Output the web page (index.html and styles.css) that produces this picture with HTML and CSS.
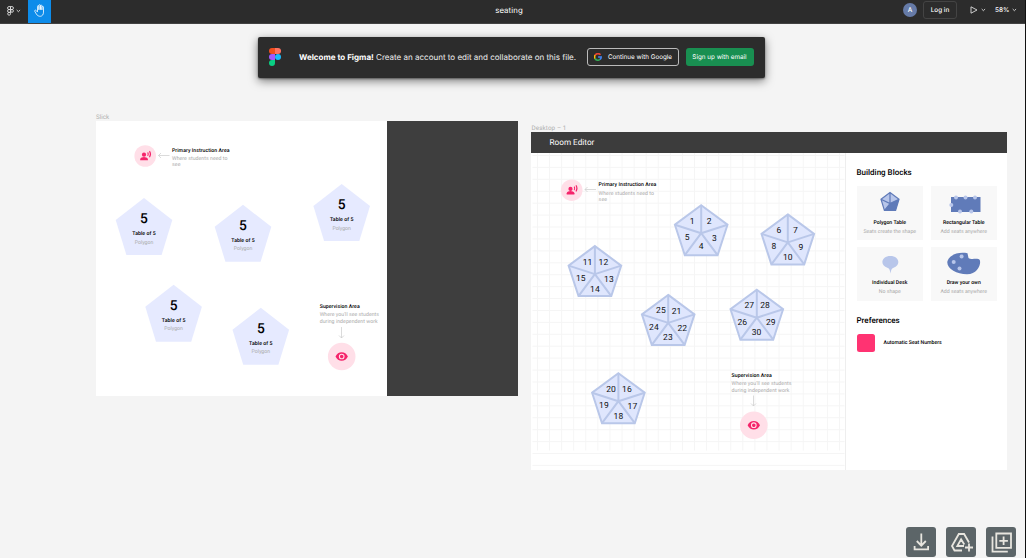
FILE: index.html
```html
<!DOCTYPE html>
<html lang="en">
<head>
<meta charset="utf-8">
<title>seating</title>
<link rel="stylesheet" href="styles.css">
</head>
<body>
<svg class="defs" width="0" height="0">
  <defs>
    <polygon id="pentagon" points="0,0 28.3,22 17.6,57 -17.6,57 -28.3,22"/>
    <g id="seats">
      <polygon points="0,1 26.3,20.5 16.4,51 -16.4,51 -26.3,20.5"/>
      <path d="M0 29V1M0 29L26.3 20.5M0 29L16.4 51M0 29L-16.4 51M0 29L-26.3 20.5"/>
    </g>
    <g id="speaker">
      <circle r="10.8" fill="#ffdfe8"/>
      <g fill="#f5246b">
        <circle cx="-1.2" cy="-1.3" r="2.1"/>
        <path d="M-5 4.2V3C-5 1.6-2.4.9-1.2.9S2.7 1.6 2.7 3v1.2z"/>
      </g>
      <path d="M2.500-3.600q1.100 1.700 0 3.500M4.300-4.900q2 3.100 0 6.200" fill="none" stroke="#f5246b" stroke-width="1.100"/>
    </g>
    <g id="eye">
      <circle r="13.8" fill="#ffdfe8"/>
      <path d="M-6.2 0C-5-2.8-2.6-4.3 0-4.3S5-2.8 6.2 0C5 2.8 2.6 4.3 0 4.3S-5 2.8-6.2 0z" fill="#f5246b"/>
      <circle r="2.3" fill="#f5246b" stroke="#ffdfe8" stroke-width="1.1"/>
    </g>
  </defs>
</svg>

<header class="topbar">
  <div class="menu">
    <svg width="7" height="10" viewBox="0 0 7 10" class="line"><path d="M3.5.6H2a1.4 1.4 0 0 0 0 2.9h1.5zM3.5.6H5a1.4 1.4 0 0 1 0 2.9H3.5zM3.5 3.5H2a1.4 1.4 0 0 0 0 2.9h1.5zM2 6.4a1.4 1.4 0 1 0 1.5 1.4V6.4z"/><circle cx="5" cy="4.9" r="1.4"/></svg>
    <svg width="5" height="4" viewBox="0 0 5 4" class="line"><path d="M.7 1l1.7 1.7L4.1 1"/></svg>
  </div>
  <div class="hand">
    <svg width="12" height="13" viewBox="0 0 12 13"><path d="M3.5 7.8V2.4c0-1.1 1.4-1.1 1.4 0V6M4.9 5.7V1.5c0-1.1 1.5-1.1 1.5 0v4.2M6.4 5.7V1.9c0-1.1 1.5-1.1 1.5 0v3.9M7.9 6V3.1c0-1 1.6-1 1.6 0v5c0 5.3-5.4 5.1-7.1 2L.8 7.4c-.6-1.1.8-1.7 1.5-.8l1.2 1.5" fill="none" stroke="#fff" stroke-width=".8" stroke-linejoin="round"/></svg>
  </div>
  <div class="title">seating</div>
  <div class="account">
    <span class="avatar">A</span>
    <span class="login">Log in</span>
    <svg class="play line" width="8" height="8" viewBox="0 0 8 8"><path d="M1 .8L7 4 1 7.2z"/></svg>
    <svg class="chev line" width="5" height="4" viewBox="0 0 5 4"><path d="M.7 1l1.7 1.7L4.1 1"/></svg>
    <span class="percent">58%</span>
    <svg class="chev2 line" width="5" height="4" viewBox="0 0 5 4"><path d="M.7 1l1.7 1.7L4.1 1"/></svg>
  </div>
</header>

<section class="banner">
  <svg width="12" height="18" viewBox="0 0 12 18"><path d="M6 0H3a3 3 0 0 0 0 6h3z" fill="#f24e1e"/><path d="M6 0h3a3 3 0 0 1 0 6H6z" fill="#ff7262"/><path d="M6 6H3a3 3 0 0 0 0 6h3z" fill="#a259ff"/><circle cx="9" cy="9" r="3" fill="#1abcfe"/><path d="M3 12h3v3a3 3 0 1 1-3-3z" fill="#0acf83"/></svg>
  <p class="welcome"><b>Welcome to Figma!</b> Create an account to edit and collaborate on this file.</p>
  <div class="google">
    <svg width="8" height="8" viewBox="0 0 8 8" fill="none" stroke-width="1.6"><path d="M1 2.4A3.3 3.3 0 0 1 6.5 1.8" stroke="#ea4335"/><path d="M1.1 2.2a3.3 3.3 0 0 0 0 3.5" stroke="#fbbc05"/><path d="M1 5.5a3.3 3.3 0 0 0 5.2.8" stroke="#34a853"/><path d="M4.1 4h3.1a3.3 3.3 0 0 1-1.1 2.4" stroke="#4285f4"/></svg>
    <span>Continue with Google</span>
  </div>
  <div class="email">Sign up with email</div>
</section>

<main class="canvas">
  <span class="label slick-label">Slick</span>
  <section class="frame slick">
    <svg width="423" height="275" viewBox="96 121 423 275">
      <use href="#speaker" x="145.2" y="156"/>
      <path class="arrow" d="M169.500 155.500H158.500M161 153l-2.500 2.500 2.500 2.500"/>
      <text class="bold" x="172" y="151.600" textLength="57.500">Primary Instruction Area</text>
      <text class="note" x="172" y="160.200" textLength="55.500">Where students need to</text>
      <text class="note" x="172" y="166.400" textLength="8.500">see</text>
      <g class="table" transform="translate(144 198)"><use href="#pentagon"/><text class="count" y="25">5</text><text class="bold" y="37" textLength="23.500">Table of 5</text><text class="note" y="45.500" textLength="18.500">Polygon</text></g>
      <g class="table" transform="translate(243 204.800)"><use href="#pentagon"/><text class="count" y="25">5</text><text class="bold" y="37" textLength="23.500">Table of 5</text><text class="note" y="45.500" textLength="18.500">Polygon</text></g>
      <g class="table" transform="translate(341.700 184)"><use href="#pentagon"/><text class="count" y="25">5</text><text class="bold" y="37" textLength="23.500">Table of 5</text><text class="note" y="45.500" textLength="18.500">Polygon</text></g>
      <g class="table" transform="translate(173.600 284.700)"><use href="#pentagon"/><text class="count" y="25">5</text><text class="bold" y="37" textLength="23.500">Table of 5</text><text class="note" y="45.500" textLength="18.500">Polygon</text></g>
      <g class="table" transform="translate(260.800 307.700)"><use href="#pentagon"/><text class="count" y="25">5</text><text class="bold" y="37" textLength="23.500">Table of 5</text><text class="note" y="45.500" textLength="18.500">Polygon</text></g>
      <text class="bold" x="319.700" y="307.900" textLength="40">Supervision Area</text>
      <text class="note" x="319.700" y="316.400" textLength="59.300">Where you'll see students</text>
      <text class="note" x="319.700" y="322.700" textLength="58">during independent work</text>
      <path class="arrow" d="M341.500 327V338M339 335.500l2.500 2.500 2.500-2.500"/>
      <use href="#eye" x="341.700" y="356.500"/>
    </svg>
  </section>

  <span class="label desktop-label">Desktop – 1</span>
  <section class="frame desktop">
    <div class="editor-head">Room Editor</div>
    <div class="editor-body">
      <svg class="room" width="314" height="317" viewBox="531.500 153.500 314 317">
        <defs>
          <pattern id="cols" x="537.500" y="153.500" width="12.080" height="317" patternUnits="userSpaceOnUse"><rect width="1" height="317" fill="#f5f5f5"/></pattern>
          <pattern id="rows" x="531" y="155.500" width="320" height="11.920" patternUnits="userSpaceOnUse"><rect width="320" height="1" fill="#f5f5f5"/></pattern>
        </defs>
        <rect x="533" y="153.500" width="308" height="297.500" fill="url(#cols)"/>
        <rect x="533" y="153.500" width="312" height="313" fill="url(#rows)"/>
        <use href="#speaker" x="572.200" y="190.700"/>
        <path class="arrow" d="M596.500 190H585.500M588 187.500l-2.500 2.500 2.500 2.500"/>
        <text class="bold" x="599.100" y="186.500" textLength="57.700">Primary Instruction Area</text>
        <text class="note" x="599.100" y="195.100" textLength="55.300">Where students need to</text>
        <text class="note" x="599.100" y="201.300" textLength="8.500">see</text>
        <g class="seating" transform="translate(701.700 204.700)"><use href="#seats"/><text x="-9" y="19.500">1</text><text x="8" y="19.500">2</text><text x="13.200" y="36.700">3</text><text x="0" y="45.100">4</text><text x="-14" y="36">5</text></g>
        <g class="seating" transform="translate(788.300 213.900)"><use href="#seats"/><text x="-9" y="19.500">6</text><text x="7.700" y="19.500">7</text><text x="13" y="36.700">9</text><text x="0" y="46.500">10</text><text x="-14" y="36">8</text></g>
        <g class="seating" transform="translate(595.400 245.600)"><use href="#seats"/><text x="-7.300" y="19.500">11</text><text x="8.500" y="19.800">12</text><text x="14" y="36.700">13</text><text x="0" y="46.500">14</text><text x="-14.200" y="36">15</text></g>
        <g class="seating" transform="translate(668.700 294.400)"><use href="#seats"/><text x="-7.300" y="19.500">25</text><text x="8.300" y="19.800">21</text><text x="14" y="36.700">22</text><text x="-.300" y="46.500">23</text><text x="-14.300" y="36">24</text></g>
        <g class="seating" transform="translate(757.300 289.200)"><use href="#seats"/><text x="-7.500" y="19.500">27</text><text x="8.300" y="19.800">28</text><text x="14" y="36.700">29</text><text x="-.300" y="46.500">30</text><text x="-14.500" y="36">26</text></g>
        <g class="seating" transform="translate(618.900 372.700)"><use href="#seats"/><text x="-7.300" y="19.500">20</text><text x="8.500" y="19.800">16</text><text x="14" y="36.700">17</text><text x="0" y="46.500">18</text><text x="-14.500" y="36">19</text></g>
        <text class="bold" x="732" y="377.200" textLength="40.300">Supervision Area</text>
        <text class="note" x="732" y="385.700" textLength="60">Where you'll see students</text>
        <text class="note" x="732" y="392.100" textLength="58">during independent work</text>
        <path class="arrow" d="M754 396V406.500M751.500 404l2.500 2.500 2.500-2.500"/>
        <use href="#eye" x="754.300" y="425.700"/>
      </svg>
      <aside class="sidebar">
        <h2>Building Blocks</h2>
        <div class="blocks">
          <div class="block">
            <svg width="40" height="24" viewBox="0 0 40 24"><path d="M20 1.500l9 6.700-3.400 11.300H14.400L11 8.200z" fill="#b8c6ea"/><path d="M20 12.500l9-4.300-3.400 11.300H14.400z" fill="#607bb9"/><path d="M20 1.500l9 6.700-3.400 11.300H14.400L11 8.200zM20 1.500v11M11 8.200l9 4.300 9-4.300M14.400 19.500L20 12.500" fill="none" stroke="#607bb9" stroke-width="1.200"/></svg>
            <strong>Polygon Table</strong><em>Seats create the shape</em>
          </div>
          <div class="block">
            <svg width="40" height="24" viewBox="0 0 40 24"><path d="M7 6h29.500v15H7z" fill="#607bb9"/><g fill="#b8c6ea"><circle cx="12" cy="6.500" r="2"/><circle cx="21.500" cy="6.500" r="2"/><circle cx="31" cy="6.500" r="2"/><circle cx="7.300" cy="14" r="2"/><circle cx="16" cy="20.500" r="2"/><circle cx="27.300" cy="20.500" r="2"/></g></svg>
            <strong>Rectangular Table</strong><em>Add seats anywhere</em>
          </div>
          <div class="block">
            <svg width="40" height="24" viewBox="0 0 40 24"><path d="M20.300 4c5 0 8 2.700 8 6 0 3.200-3 5.300-5.700 6.300-1.300.500-1.700 3-2 5.200-.700-2.200-.800-4.700-2.200-5.200-2.700-1-6-3.100-6-6.300 0-3.300 3.200-6 7.900-6z" fill="#b8c6ea"/></svg>
            <strong>Individual Desk</strong><em>No shape</em>
          </div>
          <div class="block">
            <svg width="40" height="24" viewBox="0 0 40 24"><path d="M3.500 9C5.500 3 14-.400 23.500 1.300L24.500 6c2.500 2.200 9.500-.500 11.200 2 1.800 4-2 14.300-12.700 14.300C12 22.300 1.700 16 3.500 9z" fill="#607bb9"/><g fill="#b8c6ea"><circle cx="17.600" cy="4.600" r="2"/><circle cx="9.700" cy="10" r="2"/><circle cx="15.500" cy="16.400" r="2"/></g></svg>
            <strong>Draw your own</strong><em>Add seats anywhere</em>
          </div>
        </div>
        <h2 class="prefs">Preferences</h2>
        <div class="option"><i></i><strong>Automatic Seat Numbers</strong></div>
      </aside>
    </div>
  </section>
</main>

<div class="tools">
  <div class="tool"><svg width="30" height="30" viewBox="0 0 30 30"><path d="M15.300 6.500V18.500M10.800 14l4.500 4.600 4.500-4.600M8.600 19v3.300h13.500V19"/></svg></div>
  <div class="tool"><svg width="30" height="30" viewBox="0 0 30 30"><path d="M16 23.500H8.500L6 19l6.800-12h5.300L23 15.500M18 19h-6.700l3.800-6.800 3.200 5.300M23 16.500v8M19 20.500h8"/></svg></div>
  <div class="tool"><svg width="30" height="30" viewBox="0 0 30 30"><path d="M10.300 6.500H25v14.400H10.300zM6.500 9.500v15.200h15.300M17.600 9.500v8.600M13.300 13.800h8.600"/></svg></div>
</div>
<div class="edge"></div>
</body>
</html>
```
FILE: styles.css
```css
* { box-sizing: border-box; }
body {
  margin: 0;
  width: 1026px;
  height: 558px;
  overflow: hidden;
  position: relative;
  background: #f4f4f4;
  font-family: Roboto, "Liberation Sans", sans-serif;
  text-rendering: geometricPrecision;
}
svg { display: block; flex: none; }
.defs { position: absolute; }
.line { fill: none; stroke: #ddd; stroke-width: .9; }

.topbar {
  height: 24px;
  display: grid;
  grid-template-columns: 28px 23px 1fr 123px;
  background: #2c2c2c;
  border-bottom: 1px solid #424242;
  color: #fff;
  font-family: Inter, sans-serif;
}
.menu { display: flex; align-items: center; gap: 2px; padding: 0 0 2px 7px; }
.hand { display: flex; justify-content: center; background: #0d8cea; padding-top: 4px; }
.title { text-align: center; padding-left: 64px; font-size: 7.8px; line-height: 21px; letter-spacing: .1px; }
.account { display: flex; align-items: center; padding-bottom: 3px; font-size: 6.4px; font-weight: 500; }
.avatar { width: 14px; height: 14px; border-radius: 50%; background: #667ba8; line-height: 14px; text-align: center; }
.login { width: 34px; height: 18px; margin: 0 13px 0 6px; border: 1px solid #444; border-radius: 3px; line-height: 16px; text-align: center; }
.chev { margin: 0 9px 0 3px; }
.chev2 { margin-left: 3px; }

.banner {
  position: absolute;
  left: 258px;
  top: 37px;
  width: 507px;
  height: 41px;
  display: flex;
  align-items: center;
  padding: 0 0 1px 11px;
  background: #2c2c2c;
  border-radius: 2px;
  box-shadow: 0 3px 10px rgba(0, 0, 0, .5), 0 1px 2px rgba(0, 0, 0, .4);
  color: #fff;
  font-family: Inter, sans-serif;
}
.welcome { width: 277px; margin: 0 11px 0 18px; font-size: 8.03px; line-height: 10px; white-space: nowrap; color: #eee; }
.welcome b { color: #fff; }
.google, .email { height: 18px; display: flex; align-items: center; justify-content: center; border-radius: 3px; font-size: 6.3px; white-space: nowrap; }
.google { width: 92px; gap: 6px; border: 1px solid #bbb; }
.email { width: 68px; margin-left: 6.5px; background: #198f51; }

.label { position: absolute; font-size: 6.3px; line-height: 8px; color: #b0b0b0; white-space: nowrap; }
.slick-label { left: 96px; top: 113px; }
.desktop-label { left: 531.5px; top: 124px; letter-spacing: .1px; }
.frame { position: absolute; background: #fff; }
.slick { left: 96px; top: 121px; width: 422.4px; height: 275px; background: linear-gradient(90deg, #fff 291.5px, #3e3e3e 291.5px); }
.desktop { left: 531px; top: 132px; width: 476px; height: 338px; }
.editor-head { height: 21px; padding-left: 18.5px; background: #3c3c3c; color: #fff; font-size: 8.2px; line-height: 23px; }
.editor-body { display: flex; height: 317px; overflow: hidden; }

text { font-family: Roboto, sans-serif; }
.bold { font-size: 5.2px; font-weight: 500; fill: #000; }
.note { font-size: 5.2px; fill: #aaa; }
.table { fill: #e6eaff; text-anchor: middle; }
.count { font-size: 13.8px; font-weight: 500; fill: #000; }
.arrow { fill: none; stroke: #ccc; stroke-width: .7; }
.seating { fill: #dfe6fd; stroke: #b9c7e9; stroke-width: 2; text-anchor: middle; }
.seating text { fill: #111; stroke: none; font-size: 8.5px; }

.sidebar { width: 162px; padding: 15px 0 0 10.5px; border-left: 1px solid #eee; }
h2 { margin: 0; font-size: 8px; line-height: 10px; font-weight: 500; white-space: nowrap; }
.blocks { display: grid; grid-template-columns: 66.5px 66.5px; grid-auto-rows: 54px; gap: 6.5px 7.5px; margin-top: 8.4px; }
.block { display: flex; flex-direction: column; align-items: center; padding-top: 5px; background: #f8f8f8; }
.block strong { margin-top: 4.6px; }
strong, em { font-size: 5.2px; line-height: 6px; white-space: nowrap; }
strong { font-weight: 500; }
em { margin-top: 3px; font-style: normal; color: #aaa; }
.prefs { margin-top: 15.6px; }
.option { display: flex; align-items: center; gap: 8.5px; margin-top: 7.5px; }
.option i { width: 18.5px; height: 18.5px; border-radius: 2.5px; background: #ff3372; }

.tools { position: absolute; left: 906px; top: 527px; display: flex; gap: 10px; }
.tool { width: 30px; height: 30px; border-radius: 3px; background: #5c6568; }
.tool path { fill: none; stroke: #e8e6df; stroke-width: 1.8; }
.edge { position: absolute; right: 0; top: 0; width: 1px; height: 558px; background: #111; }
```
